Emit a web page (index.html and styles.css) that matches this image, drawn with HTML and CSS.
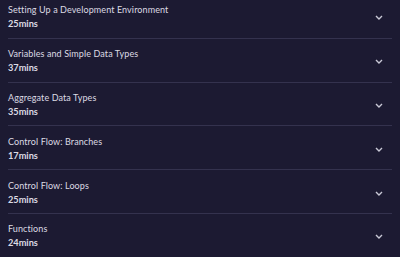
FILE: index.html
```html
<!DOCTYPE html>
<html>
<head>
<meta charset="utf-8">
<link rel="stylesheet" href="styles.css">
</head>
<body>
<ul class="list">
  <li class="row"><div class="info"><div class="title">Setting Up a Development Environment</div><div class="dur">25mins</div></div><svg class="chev" width="8" height="5" viewBox="0 0 8 5"><path d="M1 1 L4 4 L7 1" fill="none" stroke="#c9c8d6" stroke-width="1.4"/></svg></li>
  <li class="row"><div class="info"><div class="title">Variables and Simple Data Types</div><div class="dur">37mins</div></div><svg class="chev" width="8" height="5" viewBox="0 0 8 5"><path d="M1 1 L4 4 L7 1" fill="none" stroke="#c9c8d6" stroke-width="1.4"/></svg></li>
  <li class="row"><div class="info"><div class="title">Aggregate Data Types</div><div class="dur">35mins</div></div><svg class="chev" width="8" height="5" viewBox="0 0 8 5"><path d="M1 1 L4 4 L7 1" fill="none" stroke="#c9c8d6" stroke-width="1.4"/></svg></li>
  <li class="row"><div class="info"><div class="title">Control Flow: Branches</div><div class="dur">17mins</div></div><svg class="chev" width="8" height="5" viewBox="0 0 8 5"><path d="M1 1 L4 4 L7 1" fill="none" stroke="#c9c8d6" stroke-width="1.4"/></svg></li>
  <li class="row"><div class="info"><div class="title">Control Flow: Loops</div><div class="dur">25mins</div></div><svg class="chev" width="8" height="5" viewBox="0 0 8 5"><path d="M1 1 L4 4 L7 1" fill="none" stroke="#c9c8d6" stroke-width="1.4"/></svg></li>
  <li class="row"><div class="info"><div class="title">Functions</div><div class="dur">24mins</div></div><svg class="chev" width="8" height="5" viewBox="0 0 8 5"><path d="M1 1 L4 4 L7 1" fill="none" stroke="#c9c8d6" stroke-width="1.4"/></svg></li>
</ul>
</body>
</html>
```
FILE: styles.css
```css
html, body {
  margin: 0;
  padding: 0;
  background: #1c1a32;
  overflow: hidden;
}
.list {
  list-style: none;
  margin: -5px 8px 0 8px;
  padding: 0;
  font-family: Lato, "Noto Sans", sans-serif;
  color: #dcdbe4;
}
.row {
  display: flex;
  align-items: center;
  justify-content: space-between;
  height: 42.8px;
  border-bottom: 1px solid #34324e;
}
.info {
  display: flex;
  flex-direction: column;
  gap: 2px;
  padding-top: 2px;
}
.title {
  font-size: 9px;
  line-height: 12px;
  letter-spacing: 0.1px;
}
.dur {
  font-size: 9.2px;
  line-height: 12px;
  font-weight: 700;
}
.chev {
  margin-right: 9px;
  margin-top: 3px;
}
```
